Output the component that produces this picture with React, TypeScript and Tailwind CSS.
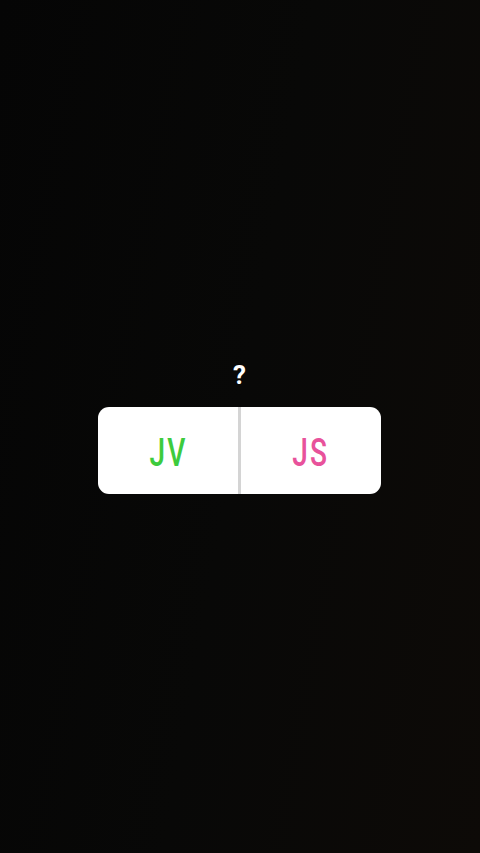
export default function App() {
  return (
    <div className="w-[480px] h-[853px] bg-[linear-gradient(100deg,#050505_0%,#080807_50%,#0d0a07_100%)] flex flex-col items-center pt-[357px]" style={{ fontFamily: '"Roboto", "Liberation Sans", sans-serif' }}>
      <div className="text-white text-[26px] font-bold leading-[36px] h-[50px] mr-[1px]">?</div>
      <div className="w-[283px] h-[87px] bg-white rounded-[11px] flex overflow-hidden mr-[1px]">
        <div className="flex-1 flex items-center justify-center pt-[5px]">
          <span className="text-[#3dcb3d] text-[39px] font-medium inline-block scale-x-[0.72] tracking-[3px] leading-none">JV</span>
        </div>
        <div className="w-[3px] bg-[#d4d4d4]" />
        <div className="flex-1 flex items-center justify-center pt-[5px]">
          <span className="text-[#e8529b] text-[39px] font-medium inline-block scale-x-[0.72] tracking-[3px] leading-none">JS</span>
        </div>
      </div>
    </div>
  );
}
